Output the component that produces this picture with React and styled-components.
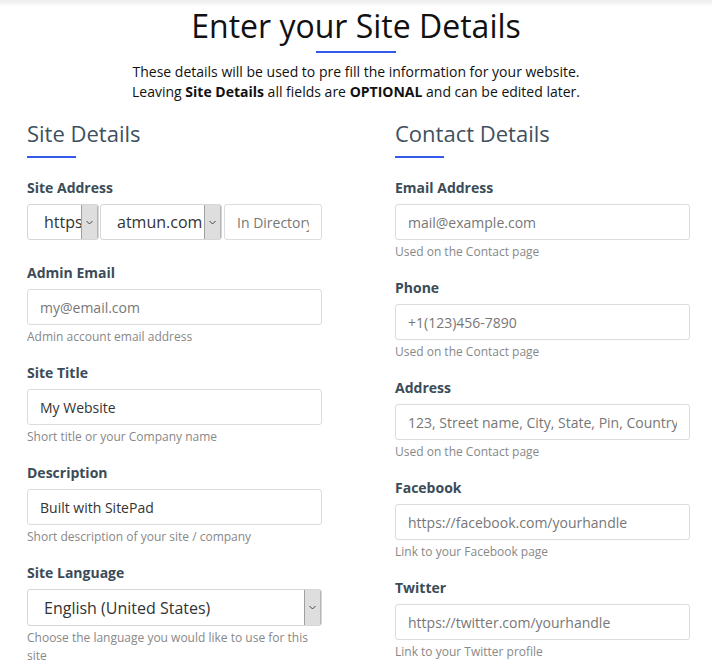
import styled, { createGlobalStyle } from "styled-components";

const GlobalStyle = createGlobalStyle`
    html, body {
        margin: 0;
        padding: 0;
        background: #fff;
    }
    body {
        font-family: "Open Sans", "Liberation Sans", sans-serif;
        color: #111;
    }
    * {
        box-sizing: border-box;
    }
`;

const Page = styled.div`
    width: 712px;
    min-height: 670px;
    background: linear-gradient(to bottom, #ececec 0px, #fff 7px);
    padding-top: 7px;
`;

const Intro = styled.header`
    display: flex;
    flex-direction: column;
    align-items: center;
    text-align: center;
`;

const Title = styled.h1`
    margin: 0;
    font-size: 32px;
    font-weight: 400;
    line-height: 38px;
    color: #111;
`;

const TitleBar = styled.span`
    display: block;
    width: 80px;
    height: 2px;
    margin: 6px 0 9px;
    background: #3559e8;
`;

const Lead = styled.p`
    margin: 0;
    font-size: 14px;
    line-height: 20px;
    font-stretch: 90%;
    color: #111;
`;

const Columns = styled.div`
    display: grid;
    grid-template-columns: 295px 295px;
    column-gap: 73px;
    padding: 16px 0 0 27px;
`;

const Column = styled.section`
    display: flex;
    flex-direction: column;
`;

const SectionTitle = styled.h2`
    margin: 0;
    font-size: 22px;
    font-weight: 400;
    line-height: 30px;
    color: #3e505e;
`;

const SectionBar = styled.span`
    display: block;
    width: 49px;
    height: 2px;
    margin: 8px 0 20px;
    background: #3559e8;
`;

const Field = styled.div`
    display: flex;
    flex-direction: column;
    padding-bottom: ${props => (props.bare ? 23 : 17)}px;
`;

const Label = styled.label`
    font-size: 14px;
    font-weight: 700;
    line-height: 20px;
    font-stretch: 97%;
    color: #3b4c58;
    margin-bottom: 6px;
`;

const Input = styled.input`
    width: ${props => props.w || "100%"};
    height: 36px;
    padding: 0 12px;
    border: 1px solid #dcdcdc;
    border-radius: 3px;
    font-family: inherit;
    font-size: 14px;
    color: #333;
    background: #fff;
    outline: none;

    &::placeholder {
        color: #777;
        opacity: 1;
    }
`;

const Help = styled.small`
    display: block;
    margin-top: 3px;
    font-size: 12px;
    line-height: 18px;
    color: #888;
`;

const Row = styled.div`
    display: flex;
    gap: 1px;
`;

const SelectBox = styled.div`
    display: flex;
    width: ${props => props.w};
    height: ${props => props.h || 36}px;
    border: 1px solid #d6d6d6;
    border-radius: 3px;
    overflow: hidden;
    background: #fff;
    margin-right: ${props => props.mr || 0}px;
`;

const SelectField = styled.select`
    flex: 1;
    min-width: 0;
    appearance: none;
    border: none;
    outline: none;
    background: transparent;
    padding: 0 0 0 16px;
    font-family: inherit;
    font-size: 16px;
    color: #333;
`;

const Arrow = styled.span`
    display: flex;
    align-items: center;
    justify-content: center;
    width: 17px;
    background: #dedede;
    border-left: 1px solid #a0a0a0;
    border-right: 1px solid #b5b5b5;
    color: #444;
`;

const Chevron = () => (
    <svg width="7" height="5" viewBox="0 0 7 5">
        <path d="M0.5 1 L3.5 4 L6.5 1" fill="none" stroke="currentColor" strokeWidth="1" />
    </svg>
);

const Select = ({ w, h, mr, value }) => (
    <SelectBox w={w} h={h} mr={mr}>
        <SelectField defaultValue={value}>
            <option>{value}</option>
        </SelectField>
        <Arrow>
            <Chevron />
        </Arrow>
    </SelectBox>
);

const contactFields = [
    { label: "Email Address", placeholder: "mail@example.com", help: "Used on the Contact page" },
    { label: "Phone", placeholder: "+1(123)456-7890", help: "Used on the Contact page" },
    { label: "Address", placeholder: "123, Street name, City, State, Pin, Country", help: "Used on the Contact page" },
    { label: "Facebook", placeholder: "https://facebook.com/yourhandle", help: "Link to your Facebook page" },
    { label: "Twitter", placeholder: "https://twitter.com/yourhandle", help: "Link to your Twitter profile" }
];

const App = () => (
    <Page>
        <GlobalStyle />
        <Intro>
            <Title>Enter your Site Details</Title>
            <TitleBar />
            <Lead>
                These details will be used to pre fill the information for your website.
                <br />
                Leaving <b>Site Details</b> all fields are <b>OPTIONAL</b> and can be edited later.
            </Lead>
        </Intro>
        <Columns>
            <Column>
                <SectionTitle>Site Details</SectionTitle>
                <SectionBar />
                <Field bare>
                    <Label>Site Address</Label>
                    <Row>
                        <Select w="72px" value="https" />
                        <Select w="122px" mr={1} value="atmun.com" />
                        <Input w="98px" placeholder="In Directory" />
                    </Row>
                </Field>
                <Field>
                    <Label>Admin Email</Label>
                    <Input placeholder="my@email.com" />
                    <Help>Admin account email address</Help>
                </Field>
                <Field>
                    <Label>Site Title</Label>
                    <Input defaultValue="My Website" />
                    <Help>Short title or your Company name</Help>
                </Field>
                <Field>
                    <Label>Description</Label>
                    <Input defaultValue="Built with SitePad" />
                    <Help>Short description of your site / company</Help>
                </Field>
                <Field>
                    <Label>Site Language</Label>
                    <Select w="100%" h={37} value="English (United States)" />
                    <Help>Choose the language you would like to use for this site</Help>
                </Field>
            </Column>
            <Column>
                <SectionTitle>Contact Details</SectionTitle>
                <SectionBar />
                {contactFields.map(field => (
                    <Field key={field.label}>
                        <Label>{field.label}</Label>
                        <Input placeholder={field.placeholder} />
                        <Help>{field.help}</Help>
                    </Field>
                ))}
            </Column>
        </Columns>
    </Page>
);

export default App;
